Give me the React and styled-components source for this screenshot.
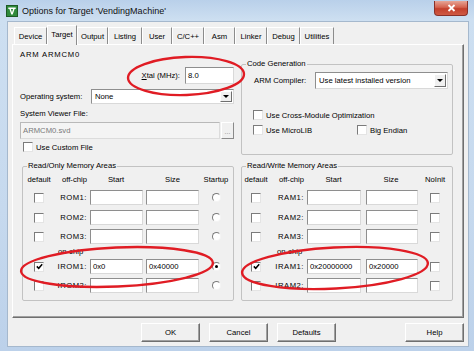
import React from "react";
import styled, { createGlobalStyle } from "styled-components";

const Global = createGlobalStyle`
  html, body { margin: 0; padding: 0; background: #c3d6eb; }
  body { width: 474px; height: 351px; overflow: hidden; font-family: "Liberation Sans", Arial, sans-serif; }
  #root { width: 474px; height: 351px; }
`;

const Window = styled.div`
  position: relative;
  width: 474px;
  height: 351px;
  box-sizing: border-box;
  display: flex;
  flex-direction: column;
  padding-bottom: 5px;
  background: linear-gradient(180deg, #b9d0ea 0px, #cddff1 20px, #c6d9ee 60%, #bcd1ea 100%);
  color: #000;
`;

const TitleBar = styled.div`
  height: 22px;
  flex: none;
  display: flex;
  align-items: center;
  padding: 0 6px;
`;

const TitleText = styled.div`
  margin-left: 4px;
  font-size: 9px;
  color: #111;
  white-space: nowrap;
`;

const CloseBtn = styled.div`
  margin-left: auto;
  align-self: flex-start;
  margin-top: 1px;
  width: 34px;
  height: 15px;
  box-sizing: border-box;
  border: 1px solid #8a3129;
  border-top: none;
  border-radius: 0 0 4px 4px;
  background: linear-gradient(180deg, #e6a596 0%, #d5634f 45%, #c3402c 55%, #cf5a44 100%);
  display: flex;
  align-items: center;
  justify-content: center;
`;

const Client = styled.div`
  flex: 1;
  margin: 0 6px 0 8px;
  background: #f0f0f0;
  box-shadow: 0 0 0 1px #a5b8cd;
  display: flex;
  flex-direction: column;
  padding: 3px 4px 4px 4px;
  font-size: 7.7px;
`;

const TabStrip = styled.div`
  height: 19px;
  flex: none;
  display: flex;
  align-items: flex-end;
  padding-left: 2px;
`;

const Tab = styled.div`
  position: relative;
  z-index: ${(p) => (p.$sel ? 2 : 1)};
  box-sizing: border-box;
  width: ${(p) => p.$w}px;
  height: ${(p) => (p.$sel ? 20 : 17)}px;
  margin-bottom: ${(p) => (p.$sel ? -1 : 0)}px;
  padding-bottom: ${(p) => (p.$sel ? 3 : 0)}px;
  border-top: 1px solid #fff;
  border-left: 1px solid #fff;
  border-right: 1px solid #8c8c8c;
  background: #f0f0f0;
  display: flex;
  align-items: center;
  justify-content: center;
  white-space: nowrap;
`;

const Panel = styled.div`
  box-sizing: border-box;
  width: 452px;
  height: 274px;
  flex: none;
  border: 1px solid;
  border-color: #fff #6f6f6f #6f6f6f #fff;
  box-shadow: inset -1px -1px 0 #a0a0a0;
  padding: 4px 10px 0 7px;
  display: flex;
  flex-direction: column;
`;

const TopGrid = styled.div`
  height: 106px;
  display: grid;
  grid-template-columns: 214px 212px;
  column-gap: 7px;
`;

const Column = styled.div`
  display: flex;
  flex-direction: column;
`;

const Line = styled.div`
  height: ${(p) => p.$h || 12}px;
  margin-top: ${(p) => p.$mt || 0}px;
  line-height: ${(p) => p.$h || 12}px;
  letter-spacing: ${(p) => (p.$caps ? "0.8px" : "normal")};
  white-space: nowrap;
`;

const FormRow = styled.div`
  height: ${(p) => p.$h}px;
  margin-top: ${(p) => p.$mt}px;
  display: grid;
  grid-template-columns: ${(p) => p.$cols};
  column-gap: ${(p) => p.$gap || 0}px;
  align-items: center;
  padding: ${(p) => p.$pad || "0"};
  white-space: nowrap;
`;

const Field = styled.div`
  box-sizing: border-box;
  height: ${(p) => p.$h || 15}px;
  width: ${(p) => (p.$w ? `${p.$w}px` : "auto")};
  justify-self: ${(p) => (p.$w ? "end" : "stretch")};
  border: 1px solid;
  border-color: ${(p) => (p.$disabled ? "#b9b9b9 #dcdcdc #dcdcdc #b9b9b9" : "#8e8e8e #d9d9d9 #d9d9d9 #8e8e8e")};
  background: ${(p) => (p.$disabled ? "#f4f4f4" : "#fff")};
  color: ${(p) => (p.$disabled ? "#7a7a7a" : "#000")};
  padding-left: 2px;
  display: flex;
  align-items: center;
  padding-bottom: 1px;
  white-space: nowrap;
  overflow: hidden;
`;

const SelectBox = styled.div`
  box-sizing: border-box;
  height: ${(p) => p.$h}px;
  border: 1px solid;
  border-color: #8e8e8e #d9d9d9 #d9d9d9 #8e8e8e;
  background: #fff;
  display: flex;
  align-items: center;
  padding-left: 3px;
  padding-right: 1px;
`;

const SelectText = styled.span`
  flex: 1;
  white-space: nowrap;
`;

const DropBtn = styled.div`
  box-sizing: border-box;
  width: 12px;
  height: calc(100% - 2px);
  background: #f0f0f0;
  border: 1px solid;
  border-color: #fff #6f6f6f #6f6f6f #fff;
  display: flex;
  align-items: center;
  justify-content: center;
  &::after {
    content: "";
    border-left: 3px solid transparent;
    border-right: 3px solid transparent;
    border-top: 3px solid #000;
  }
`;

const SmallBtn = styled.div`
  box-sizing: border-box;
  height: 17px;
  background: #f0f0f0;
  border: 1px solid;
  border-color: #fff #8a8a8a #8a8a8a #fff;
  color: #8a8a8a;
  display: flex;
  align-items: flex-end;
  justify-content: center;
  padding-bottom: 3px;
  font-size: 7px;
`;

const CheckLine = styled.div`
  height: 12px;
  margin-top: ${(p) => p.$mt || 0}px;
  padding-left: ${(p) => p.$pl || 0}px;
  display: flex;
  align-items: center;
  gap: 3px;
  white-space: nowrap;
`;

const CBox = styled.span`
  display: inline-flex;
  flex: none;
  box-sizing: border-box;
  width: 10px;
  height: 10px;
  border: 1px solid;
  border-color: #7b7b7b #e4e4e4 #e4e4e4 #7b7b7b;
  background: #fff;
  align-items: center;
  justify-content: center;
  justify-self: center;
`;

const RBox = styled.span`
  display: inline-flex;
  box-sizing: border-box;
  width: 9px;
  height: 9px;
  border-radius: 50%;
  border: 1px solid;
  border-color: #7b7b7b #f4f4f4 #f4f4f4 #7b7b7b;
  background: #fff;
  align-items: center;
  justify-content: center;
  justify-self: center;
  &::after {
    content: "";
    display: ${(p) => (p.$on ? "block" : "none")};
    width: 3px;
    height: 3px;
    border-radius: 50%;
    background: #000;
  }
`;

const Group = styled.fieldset`
  box-sizing: border-box;
  margin: ${(p) => p.$mt || 0}px 0 0 0;
  padding: 0;
  min-width: 0;
  height: ${(p) => p.$h}px;
  border: 1px solid #c2c2c2;
  border-radius: 2px;
`;

const Legend = styled.legend`
  margin-left: 4px;
  padding: 0 1px;
  line-height: 12px;
  height: 12px;
  white-space: nowrap;
`;

const Label = styled.span`
  text-align: ${(p) => p.$align || "left"};
  padding-right: ${(p) => p.$pr || 0}px;
  padding-left: ${(p) => p.$pl || 0}px;
  letter-spacing: ${(p) => (p.$caps ? "0.5px" : "normal")};
  white-space: nowrap;
`;

const BottomGrid = styled.div`
  margin-top: 5px;
  margin-left: 2px;
  display: grid;
  grid-template-columns: 212px 212px;
  column-gap: 7px;
`;

const MemRow = styled.div`
  height: ${(p) => p.$h}px;
  margin-top: ${(p) => p.$mt}px;
  display: grid;
  grid-template-columns: ${(p) => p.$cols};
  align-items: center;
`;

const ButtonRow = styled.div`
  margin-top: 5px;
  height: 19px;
  display: flex;
  gap: 9px;
  padding-left: 129px;
`;

const Button = styled.div`
  box-sizing: border-box;
  width: 59px;
  height: 19px;
  margin-left: ${(p) => (p.$right ? "auto" : "0")};
  background: #f0f0f0;
  border: 1px solid;
  border-color: #fff #6f6f6f #6f6f6f #fff;
  box-shadow: inset -1px -1px 0 #a0a0a0;
  display: flex;
  align-items: center;
  justify-content: center;
`;

const Overlay = styled.svg`
  position: absolute;
  left: 0;
  top: 0;
  pointer-events: none;
`;

const U = styled.span`
  text-decoration: underline;
`;

const CheckBox = ({ checked }) => (
  <CBox>
    {checked && (
      <svg width="7" height="7" viewBox="0 0 7 7">
        <path d="M0.8 3.4 L2.7 5.3 L6.2 1.2" stroke="#000" strokeWidth="1.5" fill="none" />
      </svg>
    )}
  </CBox>
);

const tabs = [
  ["Device", 33],
  ["Target", 30],
  ["Output", 31],
  ["Listing", 34],
  ["User", 30],
  ["C/C++", 32],
  ["Asm", 31],
  ["Linker", 32],
  ["Debug", 33],
  ["Utilities", 34],
];

const LEFT_COLS = "32px 34px 54px 56px 1fr";
const RIGHT_COLS = "28px 36px 55px 57px 1fr";

const romRows = [
  { label: "ROM1:" },
  { label: "ROM2:" },
  { label: "ROM3:" },
  { onchip: true },
  { label: "IROM1:", start: "0x0", size: "0x40000", chk: true, sel: true },
  { label: "IROM2:" },
];

const ramRows = [
  { label: "RAM1:" },
  { label: "RAM2:" },
  { label: "RAM3:" },
  { onchip: true },
  { label: "IRAM1:", start: "0x20000000", size: "0x20000", chk: true },
  { label: "IRAM2:" },
];

const rowMargins = [5, 5, 4, 0, 1, 4];

const MemoryGroup = ({ title, cols, rows, lastHead, startW, sizeW, onchipPl, isRam }) => (
  <Group $h={141}>
    <Legend>{title}</Legend>
    <MemRow $cols={cols} $h={12} $mt={1}>
      <Label $align="center">default</Label>
      <Label $align="right" $pr={2}>off-chip</Label>
      <Label $align="center">Start</Label>
      <Label $align="center" $pl={3}>Size</Label>
      <Label $align="center">{lastHead}</Label>
    </MemRow>
    {rows.map((r, i) =>
      r.onchip ? (
        <MemRow key={i} $cols={cols} $h={14} $mt={rowMargins[i]}>
          <span />
          <Label $pl={onchipPl}>on-chip</Label>
        </MemRow>
      ) : (
        <MemRow key={i} $cols={cols} $h={15} $mt={rowMargins[i]}>
          <CheckBox checked={r.chk} />
          <Label $align="right" $pr={2} $caps>{r.label}</Label>
          <Field $w={startW}>{r.start}</Field>
          <Field $w={sizeW}>{r.size}</Field>
          {isRam ? <CheckBox /> : <RBox $on={r.sel} />}
        </MemRow>
      )
    )}
  </Group>
);

export default function App() {
  return (
    <>
      <Global />
      <Window>
        <TitleBar>
          <svg width="12" height="12" viewBox="0 0 12 12">
            <rect x="0.5" y="0.5" width="11" height="11" fill="#2f8a3b" stroke="#1d5a25" />
            <path d="M2.3 2.5 H9.7 V4 H8.6 L6.7 9.6 H5.3 L3.4 4 H2.3 Z M4.9 4 L6 7.6 L7.1 4 Z" fill="#fff" fillRule="evenodd" />
          </svg>
          <TitleText>Options for Target 'VendingMachine'</TitleText>
          <CloseBtn>
            <svg width="9" height="8" viewBox="0 0 9 8">
              <path d="M1.5 1 L7.5 7 M7.5 1 L1.5 7" stroke="#fff" strokeWidth="1.8" />
            </svg>
          </CloseBtn>
        </TitleBar>
        <Client>
          <TabStrip>
            {tabs.map(([t, w]) => (
              <Tab key={t} $w={w} $sel={t === "Target"}>{t}</Tab>
            ))}
          </TabStrip>
          <Panel>
            <TopGrid>
              <Column>
                <Line $caps>ARM ARMCM0</Line>
                <FormRow $h={17} $mt={6} $cols="1fr 49px" $gap={5}>
                  <Label $align="right"><U>X</U>tal (MHz):</Label>
                  <Field $h={17}>8.0</Field>
                </FormRow>
                <FormRow $h={15} $mt={5} $cols="71px 1fr">
                  <Label>Operating system:</Label>
                  <SelectBox $h={15}>
                    <SelectText>None</SelectText>
                    <DropBtn />
                  </SelectBox>
                </FormRow>
                <Line $mt={4}>System Viewer File:</Line>
                <FormRow $h={17} $mt={2} $cols="1fr 13px" $gap={1}>
                  <Field $h={17} $disabled>ARMCM0.svd</Field>
                  <SmallBtn>...</SmallBtn>
                </FormRow>
                <CheckLine $mt={2} $pl={3}>
                  <CheckBox />
                  <span>Use Custom File</span>
                </CheckLine>
              </Column>
              <Column>
                <Group $mt={9} $h={97}>
                  <Legend>Code Generation</Legend>
                  <FormRow $h={17} $mt={2} $cols="61px 133px" $pad="0 0 0 12px">
                    <Label>ARM Compiler:</Label>
                    <SelectBox $h={17}>
                      <SelectText>Use latest installed version</SelectText>
                      <DropBtn />
                    </SelectBox>
                  </FormRow>
                  <CheckLine $mt={20} $pl={11}>
                    <CheckBox />
                    <span>Use Cross-Module Optimization</span>
                  </CheckLine>
                  <FormRow $h={12} $mt={3} $cols="104px 1fr" $pad="0 0 0 11px">
                    <CheckLine>
                      <CheckBox />
                      <span>Use MicroLIB</span>
                    </CheckLine>
                    <CheckLine>
                      <CheckBox />
                      <span>Big Endian</span>
                    </CheckLine>
                  </FormRow>
                </Group>
              </Column>
            </TopGrid>
            <BottomGrid>
              <MemoryGroup
                title="Read/Only Memory Areas"
                cols={LEFT_COLS}
                rows={romRows}
                lastHead="Startup"
                startW={53}
                sizeW={53}
                onchipPl={3}
              />
              <MemoryGroup
                title="Read/Write Memory Areas"
                cols={RIGHT_COLS}
                rows={ramRows}
                lastHead="NoInit"
                startW={54}
                sizeW={52}
                onchipPl={7}
                isRam
              />
            </BottomGrid>
          </Panel>
          <ButtonRow>
            <Button>OK</Button>
            <Button>Cancel</Button>
            <Button>Defaults</Button>
            <Button $right>Help</Button>
          </ButtonRow>
        </Client>
        <Overlay width="474" height="351" viewBox="0 0 474 351">
          <g fill="none" stroke="#e01c24" strokeWidth="2.4">
            <ellipse cx="186" cy="76" rx="58" ry="19" transform="rotate(-2 186 76)" />
            <ellipse cx="117" cy="267" rx="96" ry="19.5" transform="rotate(-2.5 117 267)" />
            <ellipse cx="335" cy="268" rx="93" ry="20.5" transform="rotate(-3 335 268)" />
          </g>
        </Overlay>
      </Window>
    </>
  );
}
